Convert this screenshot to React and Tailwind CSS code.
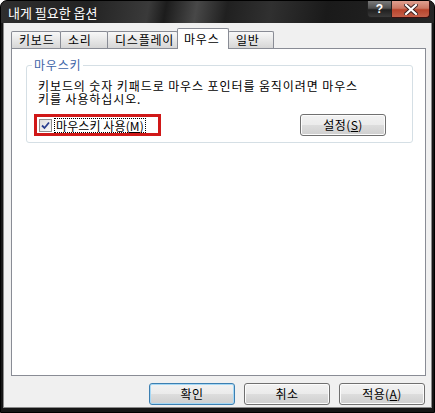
import React from "react";

const TabBtn = ({ w, children }) => (
  <div
    className={`${w} h-[17px] border border-[#898c95] border-b-0 rounded-t-[2px] bg-[linear-gradient(to_bottom,#f8f8f8,#e9e9e9_45%,#d6d6d6)] text-[12px] leading-[16px] pl-[7px] tracking-[0.8px] text-black -mr-px`}
  >
    {children}
  </div>
);

const Btn = ({ w = "w-[86px]", def = false, children }) => (
  <div
    className={`${w} h-[22px] rounded-[3px] border ${
      def ? "border-[#3c7fb1] shadow-[inset_0_0_0_1px_#a6d8f5]" : "border-[#707070] shadow-[inset_0_0_0_1px_#fcfcfc]"
    } bg-[linear-gradient(to_bottom,#f2f2f2,#ebebeb_48%,#dddddd_50%,#cfcfcf)] flex items-center justify-center text-[12px] tracking-[0.4px] text-black`}
  >
    {children}
  </div>
);

export default function App() {
  return (
    <div className="w-[435px] h-[413px] bg-[#161616] rounded-t-[7px] border border-black flex flex-col px-[2px] pb-[4px] font-['Noto_Sans_CJK_KR','Noto_Sans_CJK_SC',sans-serif] overflow-hidden">
      {/* title bar */}
      <div className="relative h-[22px] shrink-0 -mx-[2px] bg-[linear-gradient(100deg,#2e2e2e_0%,#222_20%,#3a3a3a_34%,#1c1c1c_38%,#484848_45%,#202020_52%,#303030_62%,#1a1a1a_75%,#262626_100%)] flex items-center">
        <span className="pl-[7px] text-white text-[13px] leading-none">내게 필요한 옵션</span>
        <div className="absolute right-[4px] top-0 flex">
          <div className="w-[25px] h-[17px] rounded-bl-[4px] border border-[#222] border-t-0 bg-[linear-gradient(to_bottom,#7a7a7a,#505050_45%,#202020_55%,#3a3a3a)] flex items-center justify-center text-white text-[12px] font-bold leading-none font-['Liberation_Sans',sans-serif]">
            ?
          </div>
          <div className="w-[38px] h-[17px] rounded-br-[4px] border border-[#3a1010] border-t-0 border-l-0 bg-[linear-gradient(to_bottom,#e0a090,#cc7864_45%,#b8442c_55%,#c4604a)] flex items-center justify-center">
            <svg width="14" height="11" viewBox="0 0 14 11">
              <path d="M2 1 L12 10 M12 1 L2 10" stroke="#3a2020" strokeWidth="4" strokeLinecap="square" />
              <path d="M2 1 L12 10 M12 1 L2 10" stroke="#ffffff" strokeWidth="2.2" strokeLinecap="square" />
            </svg>
          </div>
        </div>
      </div>

      {/* body */}
      <div className="flex-1 bg-[#f0f0f0] border-l border-r border-b border-[#8a8a8a] flex flex-col pl-[7px] pr-[5px] pt-[5px]">
        {/* tabs */}
        <div className="h-[20px] flex items-end relative z-10">
          <TabBtn w="w-[50px]">키보드</TabBtn>
          <TabBtn w="w-[48px]">소리</TabBtn>
          <TabBtn w="w-[71px]">디스플레이</TabBtn>
          <div className="w-[52px] h-[21px] -mb-px border border-[#898c95] border-b-0 rounded-t-[2px] bg-white text-[12px] leading-[20px] pl-[6px] tracking-[0.8px] text-black -mr-px">
            마우스
          </div>
          <TabBtn w="w-[46px]">일반</TabBtn>
        </div>

        {/* panel */}
        <div className="h-[328px] bg-white border border-[#898c95] pl-[14px] pt-[16px]">
          <div className="relative w-[387px] h-[78px] border border-[#d5dfe5] rounded-[3px] pl-[11px] pt-[13px]">
            <span className="absolute -top-[8px] left-[5px] bg-white px-[2px] text-[12px] leading-[14px] tracking-[0.8px] text-[#3e64a8]">
              마우스키
            </span>
            <div className="text-[12px] leading-[13px] tracking-[0.9px] text-black">
              <div className="h-[13px]">키보드의 숫자 키패드로 마우스 포인터를 움직이려면 마우스</div>
              <div className="h-[13px]">키를 사용하십시오.</div>
            </div>
            <div className="mt-[9px] flex items-center pr-[26px]">
              <div className="-ml-[4px] h-[22px] w-[127px] border-[3px] border-[#d01818] flex items-center pl-[2px]">
                <div className="w-[13px] h-[13px] shrink-0 border border-[#8f8f8f] bg-[linear-gradient(135deg,#dcdcdc,#fbfbfb)] flex items-center justify-center">
                  <svg width="9" height="9" viewBox="0 0 9 9">
                    <path d="M1 4.5 L3.5 7 L8 1.5" fill="none" stroke="#2a3f8f" strokeWidth="1.8" />
                  </svg>
                </div>
                <div className="ml-[2px] border border-dotted border-black px-[1px] text-[12px] leading-[13px] tracking-[0.1px] text-black whitespace-nowrap">
                  마우스키 사용(<u>M</u>)
                </div>
              </div>
              <div className="ml-auto">
                <Btn w="w-[86px]">
                  설정(<u>S</u>)
                </Btn>
              </div>
            </div>
          </div>
        </div>

        {/* bottom buttons */}
        <div className="mt-[7px] flex justify-end gap-[9px] pr-px">
          <Btn def>확인</Btn>
          <Btn>취소</Btn>
          <Btn>
            적용(<u>A</u>)
          </Btn>
        </div>
      </div>
    </div>
  );
}
